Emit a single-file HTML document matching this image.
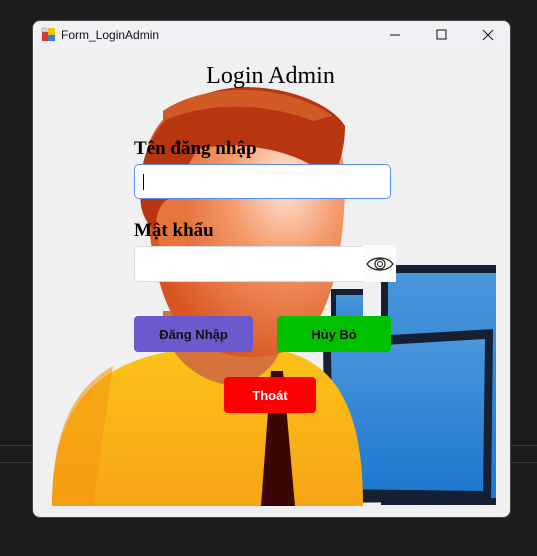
<!DOCTYPE html>
<html><head><meta charset="utf-8"><style>
*{margin:0;padding:0;box-sizing:border-box}
body{width:537px;height:556px;background:#1c1c1c;position:relative;overflow:hidden;font-family:"Liberation Sans",sans-serif}
.line{position:absolute;left:0;width:537px;height:1px;background:#3a3a3a}
.win{position:absolute;left:32px;top:20px;width:479px;height:498px;background:#f0f0f0;border-radius:8px;overflow:hidden;border:1px solid #444}
.tb{position:absolute;left:0;top:0;width:100%;height:30px;background:#f0f1f4}
.tt{position:absolute;left:28px;top:7px;color:#111;font-family:"Liberation Sans",sans-serif;font-size:12px}
.abs{position:absolute}
.lbl{position:absolute;font-family:"Liberation Serif",serif;font-weight:bold;font-size:19px;color:#000}
.btn{position:absolute;height:36px;border-radius:4px;font-weight:bold;font-size:13px;display:flex;align-items:center;justify-content:center;font-family:"Liberation Sans",sans-serif}
</style></head><body>
<div class="line" style="top:445px"></div><div class="line" style="top:462px"></div>
<div class="win">
<div class="tb"></div>
<svg class="abs" style="left:8px;top:6px" width="16" height="16"><rect x="1" y="5" width="6" height="9" fill="#d33"/><rect x="7" y="1" width="7" height="7" fill="#f5c000"/><rect x="7" y="8" width="7" height="6" fill="#3a7fd8"/><rect x="1" y="1" width="5" height="4" fill="#ddd" stroke="#888" stroke-width=".5"/></svg>
<div class="tt">Form_LoginAdmin</div>
<svg class="abs" style="left:350px;top:6px" width="120" height="16"><line x1="7" y1="8" x2="17" y2="8" stroke="#111"/><rect x="54" y="3" width="9" height="9" fill="none" stroke="#111"/><path d="M100 3l10 10M110 3l-10 10" stroke="#111"/></svg>
<svg class="abs" style="left:0;top:0" width="479" height="498">
<defs>
<radialGradient id="face" cx="0.7" cy="0.35" r="0.7"><stop offset="0" stop-color="#fde8dc"/><stop offset="0.4" stop-color="#f49a6a"/><stop offset="1" stop-color="#d9551f"/></radialGradient>
<linearGradient id="shirt" x1="0" y1="0" x2="0" y2="1"><stop offset="0" stop-color="#fbc217"/><stop offset="1" stop-color="#f7a416"/></linearGradient>
<linearGradient id="scr" x1="0" y1="0" x2="0" y2="1"><stop offset="0" stop-color="#4a96dc"/><stop offset="1" stop-color="#1f78cf"/></linearGradient>
</defs>
<rect x="348" y="244" width="115" height="240" fill="#152033"/>
<rect x="355" y="252" width="108" height="225" fill="url(#scr)"/>
<rect x="298" y="268" width="32" height="60" fill="#152033"/>
<rect x="303" y="274" width="27" height="54" fill="url(#scr)"/>
<path d="M290 318L460 308L458 480L292 482Z" fill="#152033"/>
<path d="M298 327L452 318L450 470L300 468Z" fill="url(#scr)"/>
<path d="M19 485C19 400 50 345 140 330L250 330C315 345 330 410 330 485Z" fill="url(#shirt)"/>
<path d="M19 485C19 420 35 370 80 345L60 485Z" fill="#f39a10" opacity=".6"/>
<path d="M238 350L250 350L262 485L228 485Z" fill="#3a0606"/>
<path d="M130 290C128 330 160 360 200 365C235 360 258 330 250 290Z" fill="#d6733d"/>
<path d="M112 150C110 90 170 62 225 68C290 80 315 120 312 170C310 230 300 290 270 320C240 345 180 340 150 310C125 280 114 220 112 150Z" fill="url(#face)"/>
<path d="M108 185C100 110 150 68 210 66C260 66 300 85 312 105C312 130 305 145 300 160C270 130 210 118 165 128C150 150 140 175 138 210C125 215 112 205 108 185Z" fill="#b8360f"/>
<path d="M130 90C170 62 250 60 300 95L280 100C230 80 170 82 130 100Z" fill="#cf5a25"/>
<ellipse cx="140" cy="205" rx="17" ry="28" fill="#e5773d"/>
</svg>
<div class="abs" style="left:0;width:475px;top:42px;text-align:center;font-family:'Liberation Serif',serif;font-size:24px;color:#000">Login Admin</div>
<div class="lbl" style="left:101px;top:117px">Tên đăng nhập</div>
<div class="abs" style="left:101px;top:143px;width:257px;height:35px;background:#fff;border:1px solid #5b8ff0;border-radius:5px"><div class="abs" style="left:8px;top:9px;width:1px;height:16px;background:#000"></div></div>
<div class="lbl" style="left:101px;top:199px">Mật khẩu</div>
<div class="abs" style="left:101px;top:225px;width:230px;height:36px;background:#fff;border:1px solid #d8dce2;border-right:none;border-radius:5px 0 0 5px"></div>
<div class="abs" style="left:330px;top:224px;width:33px;height:37px;background:#fbfbfb"></div>
<svg class="abs" style="left:333px;top:233px" width="28" height="20"><path d="M1 10C7 2 21 2 27 10C21 18 7 18 1 10Z" fill="none" stroke="#222" stroke-width="1.2"/><circle cx="14" cy="10" r="5" fill="none" stroke="#222" stroke-width="1.2"/><circle cx="14" cy="10" r="2.5" fill="none" stroke="#222"/></svg>
<div class="btn" style="left:101px;top:295px;width:119px;background:#6a5acd;color:#111">Đăng Nhập</div>
<div class="btn" style="left:244px;top:295px;width:114px;background:#00c000;color:#111">Hủy Bỏ</div>
<div class="btn" style="left:191px;top:356px;width:92px;background:#ff0000;color:#fff">Thoát</div>
</div>
</body></html>
